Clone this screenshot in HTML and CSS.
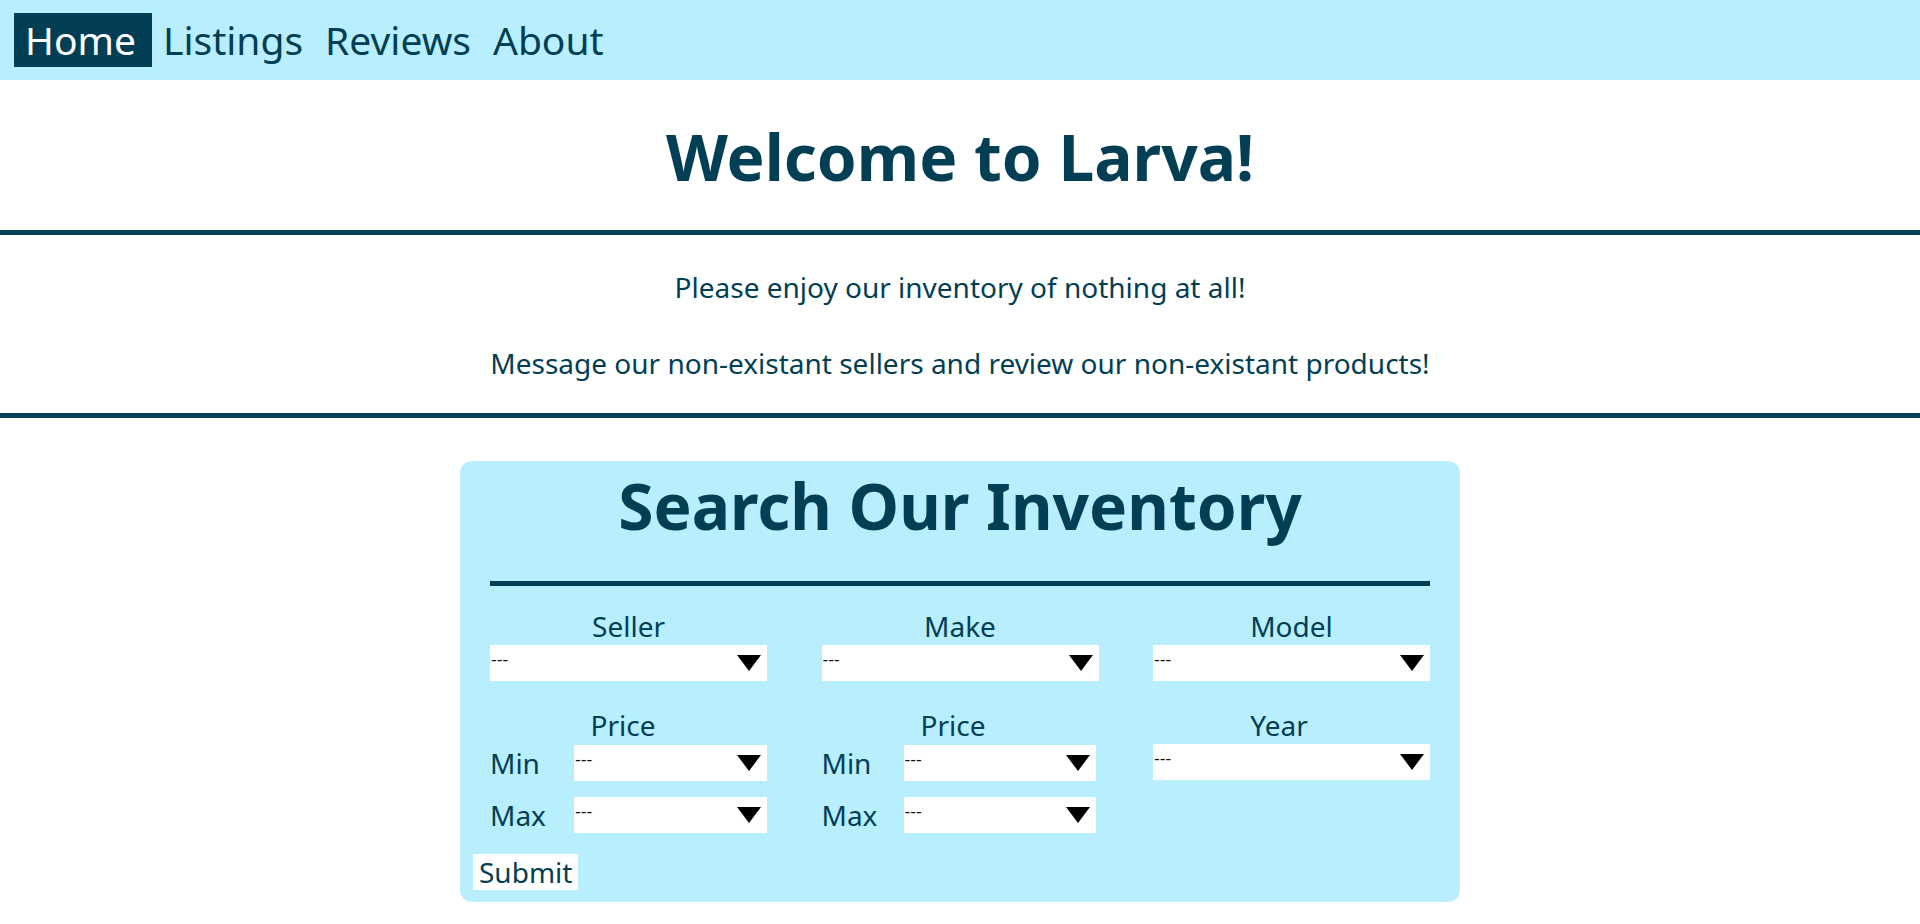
FILE: index.html
```html
<!DOCTYPE html>
<html lang="en">
<head>
<meta charset="utf-8">
<title>Larva</title>
<link rel="stylesheet" href="styles.css">
</head>
<body>
<nav class="topnav">
  <a class="nav-link active" href="#">Home</a>
  <a class="nav-link" href="#">Listings</a>
  <a class="nav-link" href="#">Reviews</a>
  <a class="nav-link" href="#">About</a>
</nav>
<header class="welcome">
  <h1 class="welcome-title">Welcome to Larva!</h1>
</header>
<hr class="rule">
<section class="intro">
  <p class="intro-text">Please enjoy our inventory of nothing at all!</p>
  <p class="intro-text">Message our non-existant sellers and review our non-existant products!</p>
</section>
<hr class="rule">
<main class="search-wrap">
  <form class="search-box">
    <h2 class="search-title">Search Our Inventory</h2>
    <hr class="rule inner-rule">
    <div class="fields">
      <div class="field">
        <label class="field-label">Seller</label>
        <div class="select-wrap"><select class="select"><option>---</option></select><span class="arrow"></span></div>
      </div>
      <div class="field">
        <label class="field-label">Make</label>
        <div class="select-wrap"><select class="select"><option>---</option></select><span class="arrow"></span></div>
      </div>
      <div class="field">
        <label class="field-label">Model</label>
        <div class="select-wrap"><select class="select"><option>---</option></select><span class="arrow"></span></div>
      </div>
      <div class="field">
        <label class="field-label label-price">Price</label>
        <div class="range">
          <span class="range-label">Min</span>
          <div class="select-wrap"><select class="select"><option>---</option></select><span class="arrow"></span></div>
          <span class="range-label">Max</span>
          <div class="select-wrap"><select class="select"><option>---</option></select><span class="arrow"></span></div>
        </div>
      </div>
      <div class="field">
        <label class="field-label label-price2">Price</label>
        <div class="range range-narrow">
          <span class="range-label">Min</span>
          <div class="select-wrap"><select class="select"><option>---</option></select><span class="arrow"></span></div>
          <span class="range-label">Max</span>
          <div class="select-wrap"><select class="select"><option>---</option></select><span class="arrow"></span></div>
        </div>
      </div>
      <div class="field">
        <label class="field-label label-year">Year</label>
        <div class="select-wrap"><select class="select"><option>---</option></select><span class="arrow"></span></div>
      </div>
    </div>
    <button class="submit" type="button">Submit</button>
  </form>
</main>
</body>
</html>
```
FILE: styles.css
```css
* { box-sizing: border-box; }
html, body { margin: 0; padding: 0; }
body {
  font-family: "Noto Sans", "Open Sans", sans-serif;
  color: #023f54;
  background: #ffffff;
}
.topnav {
  background: #b8eefe;
  height: 80px;
  display: flex;
  align-items: center;
  padding: 0 14px;
}
.nav-link {
  font-size: 39px;
  line-height: 54px;
  padding: 0 11px;
  color: #023f54;
  text-decoration: none;
}
.nav-link.active {
  background: #023f54;
  color: #ffffff;
  padding: 0 16px 0 11px;
}
.welcome {
  text-align: center;
  padding-top: 34px;
}
.welcome-title {
  margin: 0;
  font-size: 64px;
  line-height: 86px;
  font-weight: 700;
}
.rule {
  border: 0;
  height: 5px;
  background: #023f54;
  margin: 30px 0 0;
}
.intro {
  text-align: center;
  padding: 33px 0 31px;
}
.intro-text {
  margin: 0;
  font-size: 28px;
  line-height: 38px;
}
.intro-text + .intro-text { margin-top: 38px; }
.intro + .rule { margin-top: 0; }
.search-wrap {
  display: flex;
  justify-content: center;
  padding-top: 43px;
}
.search-box {
  width: 1000px;
  background: #b8eefe;
  border-radius: 12px;
  padding: 2px 13px 12px;
}
.search-title {
  margin: 0;
  text-align: center;
  font-size: 64px;
  line-height: 86px;
  font-weight: 700;
}
.inner-rule {
  margin: 32px 17px 21px;
}
.fields {
  margin: 0 17px;
  display: grid;
  grid-template-columns: repeat(3, 277px);
  justify-content: space-between;
  row-gap: 25px;
}
.field {
  display: flex;
  flex-direction: column;
}
.field-label {
  text-align: center;
  font-size: 28px;
  line-height: 38px;
}
.label-price { padding-right: 11px; }
.label-price2 { padding-right: 14px; }
.label-year { padding-right: 25px; }
.select-wrap {
  position: relative;
  height: 36px;
  background: #ffffff;
}
.select {
  appearance: none;
  -webkit-appearance: none;
  width: 100%;
  height: 100%;
  border: 0;
  background: transparent;
  font-family: "DejaVu Sans", sans-serif;
  font-size: 16px;
  color: #111;
  padding: 0 0 8px 1px;
  margin: 0;
}
.arrow {
  position: absolute;
  right: 6px;
  top: 10px;
  width: 0;
  height: 0;
  border-left: 12px solid transparent;
  border-right: 12px solid transparent;
  border-top: 16px solid #000;
  pointer-events: none;
}
.range {
  display: grid;
  grid-template-columns: 84px 193px;
  align-items: center;
  row-gap: 14px;
}
.range-narrow {
  grid-template-columns: 82px 192px;
}
.range-label {
  font-size: 28px;
  line-height: 38px;
}
.submit {
  margin-top: 20px;
  font-family: inherit;
  font-size: 28px;
  line-height: 34px;
  height: 36px;
  padding: 0 6px;
  border: 0;
  background: #ffffff;
  color: #023f54;
}
```
